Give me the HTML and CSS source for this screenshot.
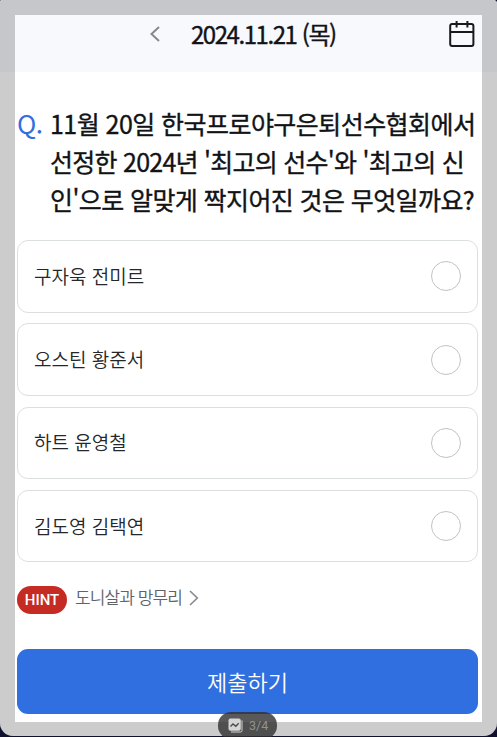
FILE: index.html
```html
<!DOCTYPE html>
<html lang="ko">
  <head>
    <meta charset="UTF-8" />
    <meta name="viewport" content="width=device-width, initial-scale=1.0" />
    <title>Quiz</title>
    <link rel="stylesheet" href="styles.css">
  </head>

  <body>
    <div class="screen">
      <header class="header">
        <svg class="back" width="12" height="18" viewBox="0 0 12 18">
          <path d="M10 2 L2.5 9 L10 16" />
        </svg>
        <h1 class="date">2024.11.21 (목)</h1>
        <svg class="calendar" width="26" height="28" viewBox="0 0 26 28">
          <rect x="1.2" y="4" width="23.2" height="22" rx="2" />
          <path d="M1.2 11.9 H24.4 M7.6 1 V7.6 M18.4 1 V7.6" />
        </svg>
      </header>

      <main class="main">
        <div class="question">
          <span class="q">Q.</span>
          <p class="text">
            <span class="line line1">11월 20일 한국프로야구은퇴선수협회에서</span>
            <span class="line line2">선정한 2024년 '최고의 선수'와 '최고의 신</span>
            <span class="line line3">인'으로 알맞게 짝지어진 것은 무엇일까요?</span>
          </p>
        </div>

        <div class="options">
          <div class="option"><span>구자욱 전미르</span><i class="radio"></i></div>
          <div class="option"><span>오스틴 황준서</span><i class="radio"></i></div>
          <div class="option"><span>하트 윤영철</span><i class="radio"></i></div>
          <div class="option"><span>김도영 김택연</span><i class="radio"></i></div>
        </div>

        <div class="hint">
          <span class="badge">HINT</span>
          <span class="hint-text">도니살과 망무리</span>
          <svg class="more" width="12" height="18" viewBox="0 0 12 18">
            <path d="M2 2 L9.3 9 L2 16" />
          </svg>
        </div>

        <button class="submit">제출하기</button>
      </main>
      <div class="frame"></div>
    </div>

    <div class="pager">
      <svg width="16" height="16" viewBox="0 0 16 16">
        <path class="back-card" d="M14 2.5 V12.5 Q14 14 12.5 14 H3" />
        <rect class="card" x="0.5" y="0.5" width="12.3" height="12.3" rx="2" />
        <path class="graph" d="M2.5 8.5 L5 6 L7.8 8.3 L10.7 5.2" />
      </svg>
      <span>3/4</span>
    </div>
  </body>
</html>
```

FILE: styles.css
```css
* {
  margin: 0;
  padding: 0;
  box-sizing: border-box;
}

body {
  position: relative;
  width: 497px;
  height: 737px;
  overflow: hidden;
  background-color: #10112e;
  font-family: "Noto Sans CJK KR", sans-serif;
}

.screen {
  position: relative;
  height: 736px;
  background-color: white;
  border-radius: 2px 4px 13px 13px;
  overflow: hidden;
}

/* dimmed edge around the page */
.frame {
  position: absolute;
  inset: 0;
  border: 15px solid rgba(0, 0, 0, 0.2);
  border-bottom-width: 14px;
}

.header {
  display: flex;
  align-items: flex-start;
  height: 72px;
  padding: 20px 22px 0 149px;
  background-color: #f8f9fd;
}

.header svg {
  fill: none;
  stroke: #17191c;
  stroke-width: 2;
}

.header .back {
  margin-top: 5px;
  stroke: #85898e;
}

.date {
  margin-left: 30px;
  color: #111316;
  font-size: 24px;
  font-weight: 400;
  line-height: 28px;
  letter-spacing: -1.45px;
  white-space: nowrap;
  -webkit-text-stroke: 0.4px #111316;
}

.calendar {
  margin-left: auto;
}

.main {
  padding: 32px 19px 0 17px;
}

.question {
  display: flex;
  line-height: 38px;
  font-size: 25px;
}

.q {
  width: 33px;
  color: #2f6fe0;
  font-size: 26px;
  letter-spacing: -0.5px;
}

.text {
  color: #111316;
  font-weight: 400;
  -webkit-text-stroke: 0.35px #111316;
}

.line {
  display: block;
  white-space: nowrap;
}

.line1 {
  letter-spacing: -0.55px;
}

.line2 {
  letter-spacing: -0.75px;
}

.line3 {
  letter-spacing: -0.6px;
}

.options {
  display: grid;
  gap: 10.8px;
  margin-top: 22px;
}

.option {
  display: flex;
  align-items: center;
  justify-content: space-between;
  height: 72.5px;
  padding: 0 16px;
  border: 1px solid #dcdfe0;
  border-radius: 11px;
  color: #25272a;
  font-size: 19px;
  font-weight: 350;
}

.option span {
  margin-bottom: 2px;
}

.radio {
  width: 30px;
  height: 30px;
  border: 1px solid #bfc4c6;
  border-radius: 50%;
}

.hint {
  display: flex;
  align-items: flex-start;
  margin-top: 24px;
}

.badge {
  width: 50px;
  height: 28px;
  border-radius: 14px;
  background-color: #c52b22;
  color: white;
  font-family: Roboto, sans-serif;
  font-size: 15px;
  font-weight: 500;
  line-height: 28px;
  text-align: center;
}

.hint-text {
  margin-left: 8px;
  color: #606469;
  font-size: 17px;
  font-weight: 350;
  line-height: 22px;
  letter-spacing: -0.9px;
}

.more {
  margin: 3px 0 0 6px;
  fill: none;
  stroke: #85898e;
  stroke-width: 1.6;
}

.submit {
  display: block;
  width: 461px;
  height: 65px;
  margin-top: 35px;
  padding-bottom: 2px;
  border: none;
  border-radius: 11px;
  background-color: #306fe0;
  color: white;
  font-family: inherit;
  font-size: 22px;
  font-weight: 350;
}

.pager {
  position: absolute;
  left: 218px;
  top: 712px;
  display: flex;
  align-items: center;
  gap: 5px;
  width: 59px;
  height: 27px;
  padding-left: 10px;
  border-radius: 13px;
  background-color: rgba(48, 48, 48, 0.8);
  color: #929292;
  font-family: Roboto, sans-serif;
  font-size: 12.5px;
}

.pager .card {
  fill: #d6d6d6;
}

.pager .back-card {
  fill: none;
  stroke: #d6d6d6;
}

.pager .graph {
  fill: none;
  stroke: #4a4a4a;
  stroke-width: 1.3;
}
```
